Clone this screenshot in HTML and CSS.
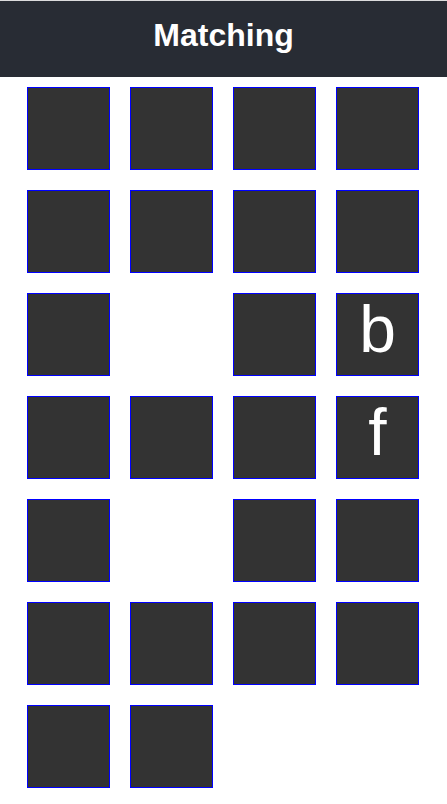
FILE: index.html
```html
<!DOCTYPE html>
<html>
<head>
<meta charset="utf-8">
<title>Matching</title>
<link rel="stylesheet" href="styles.css">
</head>
<body>
<div class="app">
  <header class="header"><h1 class="title">Matching</h1></header>
  <main class="board">
    <div class="tile"></div><div class="tile"></div><div class="tile"></div><div class="tile"></div>
    <div class="tile"></div><div class="tile"></div><div class="tile"></div><div class="tile"></div>
    <div class="tile"></div><div class="tile empty"></div><div class="tile"></div><div class="tile">b</div>
    <div class="tile"></div><div class="tile"></div><div class="tile"></div><div class="tile">f</div>
    <div class="tile"></div><div class="tile empty"></div><div class="tile"></div><div class="tile"></div>
    <div class="tile"></div><div class="tile"></div><div class="tile"></div><div class="tile"></div>
    <div class="tile"></div><div class="tile"></div>
  </main>
</div>
</body>
</html>
```
FILE: styles.css
```css
html, body {
  margin: 0;
  padding: 0;
  background: #ffffff;
}
body {
  font-family: "Liberation Sans", Arial, sans-serif;
}
.app {
  border-top: 1px solid #dcdcdc;
}
.header {
  background: #282c34;
  height: 76px;
  box-sizing: border-box;
  padding-top: 16px;
}
.title {
  margin: 0;
  color: #ffffff;
  font-size: 32px;
  font-weight: bold;
  line-height: 37px;
  text-align: center;
}
.board {
  display: grid;
  grid-template-columns: repeat(4, 83px);
  grid-auto-rows: 83px;
  gap: 20px;
  justify-content: start;
  padding-top: 10px;
  padding-left: 27px;
}
.tile {
  box-sizing: border-box;
  background: #333333;
  border: 1px solid #0000ff;
  color: #ffffff;
  font-size: 66px;
  line-height: 70px;
  text-align: center;
}
.tile.empty {
  visibility: hidden;
}
```
